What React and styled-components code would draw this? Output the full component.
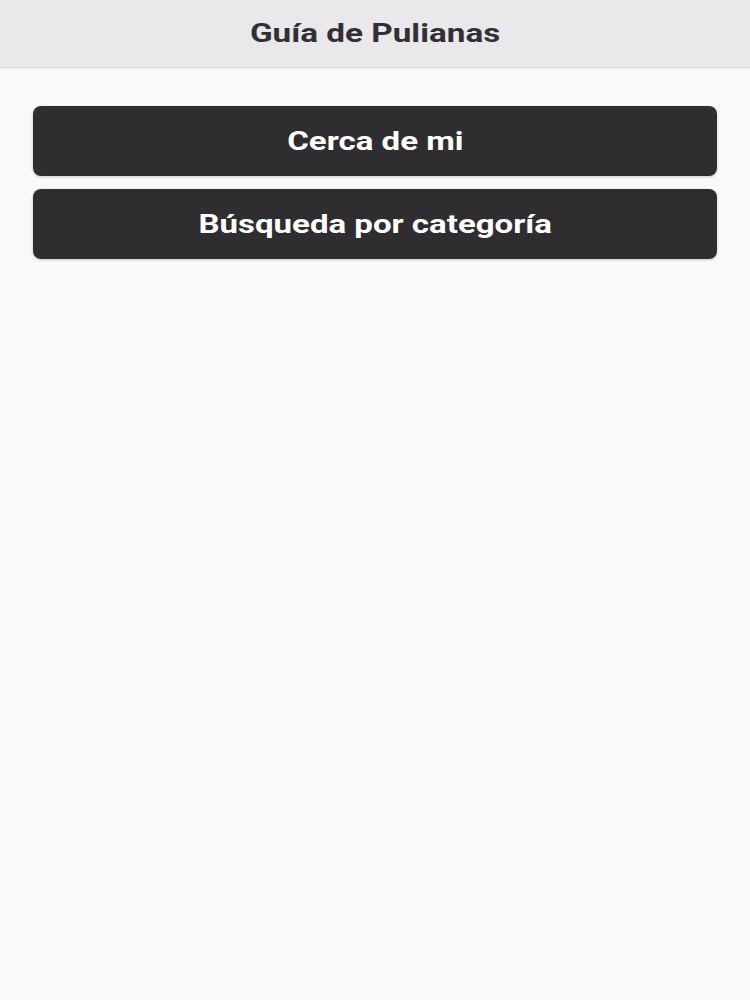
import styled, { createGlobalStyle } from "styled-components";

const GlobalStyle = createGlobalStyle`
  html, body {
    margin: 0;
    padding: 0;
    background: #faf8fb;
    font-family: Roboto, "Liberation Sans", sans-serif;
  }
`;

const App = () => {
  return (
    <Page>
      <GlobalStyle />
      <Header>
        <Title>Guía de Pulianas</Title>
      </Header>
      <Content>
        <MenuButton>
          <Label>Cerca de mi</Label>
        </MenuButton>
        <MenuButton>
          <Label>Búsqueda por categoría</Label>
        </MenuButton>
      </Content>
    </Page>
  );
};

export default App;

const Page = styled.div`
  min-height: 1000px;
  background: #faf8fb;
`;

const Header = styled.header`
  height: 67px;
  display: flex;
  align-items: center;
  justify-content: center;
  background: #e9e8ea;
  border-bottom: 1px solid #dcdbdd;
  box-shadow: 0 1px 2px rgba(0, 0, 0, 0.05);
`;

/* the app renders its text a bit wide, hence the horizontal stretch */
const Title = styled.h1`
  margin: 0;
  font-size: 25px;
  font-weight: 700;
  color: #323034;
  transform: scaleX(1.33);
`;

const Content = styled.main`
  display: flex;
  flex-direction: column;
  gap: 13px;
  padding: 38px 33px;
`;

const MenuButton = styled.button`
  height: 70px;
  border: none;
  border-radius: 8px;
  background: #302d31;
  color: #ffffff;
  font-family: Roboto, "Liberation Sans", sans-serif;
  font-size: 26px;
  font-weight: 700;
  box-shadow: 0 1px 3px rgba(0, 0, 0, 0.2);
  cursor: pointer;
`;

const Label = styled.span`
  display: inline-block;
  transform: scaleX(1.27);
`;
